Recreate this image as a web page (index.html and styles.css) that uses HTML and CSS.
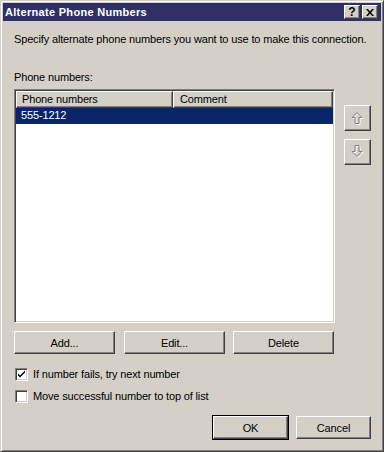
FILE: index.html
```html
<!DOCTYPE html>
<html lang="en">
<head>
    <meta charset="UTF-8">
    <title>Alternate Phone Numbers</title>
    <link rel="stylesheet" href="styles.css">
</head>
<body>
    <div class="window">
        <div class="titlebar">
            <span class="title">Alternate Phone Numbers</span>
            <div class="caption-btns">
                <button class="cap-btn help">?</button>
                <button class="cap-btn close">
                    <svg width="8" height="7" viewBox="0 0 8 7"><path d="M0 0h2l2 2.5L6 0h2L5 3.5 8 7H6L4 4.5 2 7H0l3-3.5z" fill="#000"/></svg>
                </button>
            </div>
        </div>

        <div class="body">
            <p class="intro">Specify alternate phone numbers you want to use to make this connection.</p>
            <p class="label">Phone numbers:</p>

            <div class="list-row">
                <div class="list-col">
                    <div class="listview">
                        <div class="lv-header">
                            <div class="lv-col col-phone">Phone numbers</div>
                            <div class="lv-col col-comment">Comment</div>
                        </div>
                        <div class="lv-row selected">555-1212</div>
                    </div>
                    <div class="list-btns">
                        <button class="btn">Add...</button>
                        <button class="btn">Edit...</button>
                        <button class="btn">Delete</button>
                    </div>
                </div>
                <div class="move-btns">
                    <button class="btn move">
                        <svg width="13" height="14" viewBox="0 0 13 14">
                            <path d="M7 2.5l5 5H9v6H5v-6H2z" fill="none" stroke="#fff"/>
                            <path d="M6 1.5l5 5H8v6H4v-6H1z" fill="none" stroke="#808080"/>
                        </svg>
                    </button>
                    <button class="btn move">
                        <svg width="13" height="14" viewBox="0 0 13 14">
                            <path d="M7 12.5l5-5H9v-6H5v6H2z" fill="none" stroke="#fff"/>
                            <path d="M6 11.5l5-5H8v-6H4v6H1z" fill="none" stroke="#808080"/>
                        </svg>
                    </button>
                </div>
            </div>

            <label class="check first">
                <span class="box"><svg width="9" height="9" viewBox="0 0 9 9"><path d="M1 3.5l2 2 5-5v2l-5 5-2-2z" fill="#000"/></svg></span>
                If number fails, try next number
            </label>
            <label class="check">
                <span class="box"></span>
                Move successful number to top of list
            </label>

            <div class="dialog-btns">
                <button class="btn default">OK</button>
                <button class="btn">Cancel</button>
            </div>
        </div>
    </div>
</body>
</html>
```

FILE: styles.css
```css
body {
    margin: 0;
    font-family: 'Liberation Sans', Arial, sans-serif;
    font-size: 11px;
    letter-spacing: -0.15px;
    color: #000;
}
.window {
    width: 384px;
    height: 452px;
    box-sizing: border-box;
    background-color: #d4d0c8;
    border: 1px solid;
    border-color: #d4d0c8 #404040 #404040 #d4d0c8;
    box-shadow: inset 1px 1px #fff, inset -1px -1px #808080;
    padding: 2px;
    overflow: hidden;
}
.titlebar {
    height: 18px;
    background-color: #2f3166;
    display: flex;
    align-items: center;
    justify-content: space-between;
    padding: 0 3px 0 2px;
}
.title {
    color: #fff;
    font-weight: bold;
    font-size: 11px;
    letter-spacing: 0.3px;
}
.caption-btns {
    display: flex;
    gap: 2px;
}
.cap-btn {
    width: 16px;
    height: 14px;
    padding: 0;
    box-sizing: border-box;
    background-color: #d4d0c8;
    border: 1px solid;
    border-color: #fff #404040 #404040 #fff;
    box-shadow: inset -1px -1px #808080;
    display: flex;
    align-items: center;
    justify-content: center;
    font-family: 'Liberation Sans', Arial, sans-serif;
    font-weight: bold;
    font-size: 12px;
    line-height: 1;
}
.body {
    padding: 0 10px 0 11px;
}
.intro {
    margin: 12px 0 0;
    line-height: 13px;
    white-space: nowrap;
}
.label {
    margin: 25px 0 0;
    line-height: 13px;
}
.list-row {
    display: flex;
    gap: 9px;
    margin-top: 5px;
}
.list-col {
    width: 321px;
}
.listview {
    height: 234px;
    box-sizing: border-box;
    background-color: #fff;
    border: 1px solid;
    border-color: #808080 #fff #fff #808080;
    box-shadow: inset 1px 1px #404040, inset -1px -1px #d4d0c8;
    padding: 1px;
}
.lv-header {
    display: flex;
    height: 17px;
}
.lv-col {
    box-sizing: border-box;
    background-color: #d4d0c8;
    border: 1px solid;
    border-color: #fff #404040 #404040 #fff;
    box-shadow: inset -1px -1px #808080;
    line-height: 14px;
    padding-left: 5px;
}
.col-phone {
    width: 157px;
}
.col-comment {
    flex: 1;
    padding-left: 6px;
}
.lv-row {
    height: 16px;
    line-height: 15px;
    padding-left: 5px;
}
.lv-row.selected {
    background-color: #0a246a;
    color: #fff;
}
.btn {
    font-family: 'Liberation Sans', Arial, sans-serif;
    font-size: 11px;
    letter-spacing: -0.15px;
    color: #000;
    height: 23px;
    padding: 0;
    box-sizing: border-box;
    background-color: #d4d0c8;
    border: 1px solid;
    border-color: #fff #404040 #404040 #fff;
    box-shadow: inset -1px -1px #808080;
}
.list-btns {
    display: grid;
    grid-template-columns: 102px 101px 101px;
    gap: 8px;
    margin-top: 8px;
}
.list-btns .btn:first-child {
    margin-right: 1px;
}
.move-btns {
    display: flex;
    flex-direction: column;
    gap: 8px;
    padding-top: 16px;
}
.btn.move {
    width: 27px;
    height: 26px;
    display: flex;
    align-items: center;
    justify-content: center;
}
.check {
    display: flex;
    align-items: center;
    gap: 5px;
    margin-top: 9px;
    padding-left: 1px;
    line-height: 13px;
}
.check.first {
    margin-top: 14px;
}
.box {
    width: 13px;
    height: 13px;
    box-sizing: border-box;
    background-color: #fff;
    border: 1px solid;
    border-color: #808080 #fff #fff #808080;
    box-shadow: inset 1px 1px #404040, inset -1px -1px #d4d0c8;
    display: flex;
    align-items: center;
    justify-content: center;
}
.dialog-btns {
    display: flex;
    justify-content: flex-end;
    gap: 8px;
    margin-top: 13px;
}
.dialog-btns .btn {
    width: 75px;
}
.btn.default {
    outline: 1px solid #000;
    outline-offset: 0;
    border-color: #fff #404040 #404040 #fff;
}
```
